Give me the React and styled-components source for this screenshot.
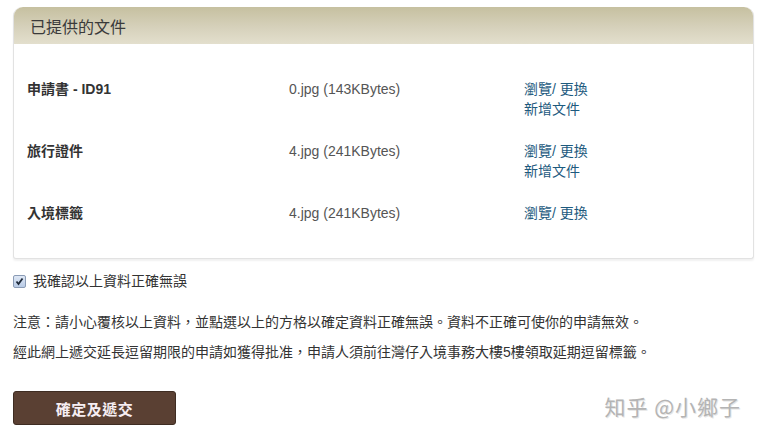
import React from 'react'
import styled, { createGlobalStyle } from 'styled-components'

const GlobalStyle = createGlobalStyle`
	html, body {
		margin: 0;
		padding: 0;
		background: #ffffff;
	}
	body {
		font-family: "Liberation Sans", "Noto Sans CJK TC", Arial, sans-serif;
		color: #333;
	}
`

const Page = styled.div`
	position: relative;
	width: 762px;
	height: 439px;
	box-sizing: border-box;
	padding: 7px 8px 0 13px;
	overflow: hidden;
`

const Panel = styled.section`
	border: 1px solid #e2e2e2;
	border-top: none;
	border-radius: 9px 9px 3px 3px;
	box-shadow: 0 2px 2px rgba(0, 0, 0, 0.06);
	background: #fff;
`

const PanelHeader = styled.div`
	height: 37px;
	display: flex;
	align-items: center;
	padding-left: 16px;
	border-radius: 9px 9px 0 0;
	background: linear-gradient(to bottom, #c6c0a0 0%, #d6d1bb 55%, #e3dfcd 100%);
	font-size: 16px;
	color: #3a3a3a;
`

const PanelBody = styled.div`
	display: flex;
	flex-direction: column;
	gap: 22px;
	padding: 35px 14px 35px 13px;
`

const Row = styled.div`
	display: grid;
	grid-template-columns: 262px 235px 1fr;
	font-size: 14px;
	line-height: 20px;
`

const Label = styled.div`
	font-weight: bold;
	color: #333;
`

const FileName = styled.div`
	color: #555;
`

const Links = styled.div`
	display: flex;
	flex-direction: column;
`

const LinkText = styled.a`
	color: #1d5a7e;
	text-decoration: none;
	cursor: pointer;
`

const ConfirmRow = styled.label`
	display: flex;
	align-items: center;
	gap: 7px;
	margin-top: 13px;
	font-size: 14px;
	line-height: 18px;
	color: #333;
`

const CheckBox = styled.span`
	width: 11px;
	height: 11px;
	border: 1px solid #8a9bb5;
	border-radius: 2px;
	background: linear-gradient(to bottom, #dfe8f5, #b9cbe6);
	display: flex;
	align-items: center;
	justify-content: center;
`

const Notes = styled.div`
	margin-top: 17px;
	font-size: 14px;
	line-height: 30px;
	color: #333;
`

const SubmitButton = styled.button`
	margin-top: 24px;
	width: 163px;
	height: 34px;
	border: 1px solid #3e2c22;
	border-radius: 3px;
	background: #5a4033;
	color: #f7eef2;
	font-family: "Liberation Sans", "Noto Sans CJK TC", sans-serif;
	font-size: 15px;
	font-weight: bold;
	letter-spacing: 0.5px;
	cursor: pointer;
`

const Watermark = styled.div`
	position: absolute;
	right: 21px;
	bottom: 18px;
	font-family: "Noto Sans CJK SC", sans-serif;
	font-size: 21px;
	letter-spacing: 1px;
	color: #b4b4b4;
	text-shadow: 1px 1px 0 #e6e6e6;
`

const documents = [
	{ label: '申請書 - ID91', file: '0.jpg (143KBytes)', canAdd: true },
	{ label: '旅行證件', file: '4.jpg (241KBytes)', canAdd: true },
	{ label: '入境標籤', file: '4.jpg (241KBytes)', canAdd: false },
]

export default function App() {
	return (
		<Page>
			<GlobalStyle />
			<Panel>
				<PanelHeader>已提供的文件</PanelHeader>
				<PanelBody>
					{documents.map((doc, i) => (
						<Row key={i}>
							<Label>{doc.label}</Label>
							<FileName>{doc.file}</FileName>
							<Links>
								<LinkText>瀏覽/ 更換</LinkText>
								{doc.canAdd && <LinkText>新增文件</LinkText>}
							</Links>
						</Row>
					))}
				</PanelBody>
			</Panel>
			<ConfirmRow>
				<CheckBox>
					<svg width="9" height="9" viewBox="0 0 9 9">
						<path d="M1.5 4.5 L3.5 7 L7.5 1.5" stroke="#1f2a3a" strokeWidth="1.8" fill="none" />
					</svg>
				</CheckBox>
				我確認以上資料正確無誤
			</ConfirmRow>
			<Notes>
				<div>注意：請小心覆核以上資料，並點選以上的方格以確定資料正確無誤。資料不正確可使你的申請無效。</div>
				<div>經此網上遞交延長逗留期限的申請如獲得批准，申請人須前往灣仔入境事務大樓5樓領取延期逗留標籤。</div>
			</Notes>
			<SubmitButton>確定及遞交</SubmitButton>
			<Watermark>知乎 @小鄉子</Watermark>
		</Page>
	)
}
